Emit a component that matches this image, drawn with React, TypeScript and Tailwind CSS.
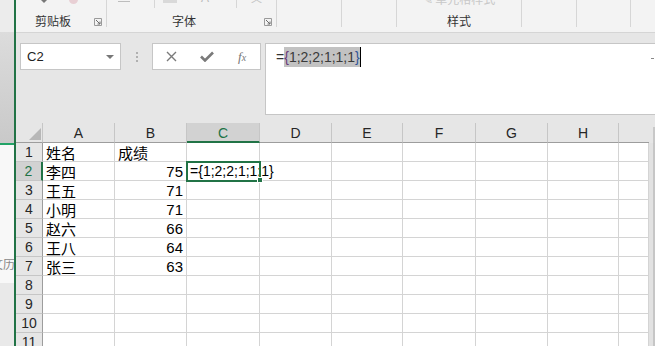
import React from "react";

const cjk = { fontFamily: '"Noto Sans CJK SC", "Liberation Sans", sans-serif' };
const latin = { fontFamily: '"Liberation Sans", "Noto Sans CJK SC", sans-serif' };

const cols = [
  { name: "A", w: "w-[72px]" },
  { name: "B", w: "w-[72px]" },
  { name: "C", w: "w-[73px]" },
  { name: "D", w: "w-[72px]" },
  { name: "E", w: "w-[71px]" },
  { name: "F", w: "w-[73px]" },
  { name: "G", w: "w-[72px]" },
  { name: "H", w: "w-[71px]" },
  { name: "", w: "w-[30px]" },
];

const rows: [string, string][] = [
  ["姓名", "成绩"],
  ["李四", "75"],
  ["王五", "71"],
  ["小明", "71"],
  ["赵六", "66"],
  ["王八", "64"],
  ["张三", "63"],
  ["", ""],
  ["", ""],
  ["", ""],
  ["", ""],
];

const Launcher = () => (
  <svg width="8" height="8" viewBox="0 0 8 8" className="mb-[2px]">
    <path d="M0.5 0.5h7v7h-7z" fill="none" stroke="#9a9a9a" strokeWidth="1" />
    <path d="M2 2l4 4M6 3.5V6H3.5" fill="none" stroke="#6a6a6a" strokeWidth="1" />
  </svg>
);

const Sep = () => <div className="w-px h-[27px] bg-[#d6d6d6] shrink-0" />;

const Ribbon = () => (
  <div className="h-[33px] bg-[#f3f3f3] border-b border-[#d5d5d5] flex items-start shrink-0 overflow-hidden">
    {/* 剪贴板 */}
    <div className="w-[90px] h-[32px] flex flex-col">
      <div className="h-[8px] flex items-start">
        <div className="ml-[25px] w-0 h-0 border-l-[3px] border-r-[3px] border-t-[3px] border-l-transparent border-r-transparent border-t-[#777]" />
        <div className="ml-[22px] -mt-[2px] w-[9px] h-[6px] rounded-b-full bg-[#e8cfd4]" />
      </div>
      <div className="flex items-end justify-between pl-[19px] pr-[4px] mt-[6px]">
        <span style={cjk} className="text-[12px] leading-[14px] text-[#333]">剪贴板</span>
        <Launcher />
      </div>
    </div>
    <Sep />
    {/* 字体 */}
    <div className="w-[169px] h-[32px] flex flex-col">
      <div className="h-[8px] flex items-start relative">
        <div className="ml-[11px] mt-[1px] w-[12px] h-px bg-[#bdbdbd]" />
        <div className="ml-[24px] h-[8px] w-px bg-[#d6d6d6]" />
        <div className="ml-[8px] w-[14px] h-[3px] bg-[#d9d9d9]" />
        <span style={latin} className="ml-[24px] -mt-[9px] text-[12px] leading-[14px] text-[#bbb]">A</span>
        <div className="ml-[27px] h-[8px] w-px bg-[#d6d6d6]" />
        <span style={cjk} className="ml-[14px] -mt-[10px] text-[11px] leading-[14px] text-[#c4c4c4]">文</span>
      </div>
      <div className="flex items-end justify-between pl-[65px] pr-[4px] mt-[6px]">
        <span style={cjk} className="text-[12px] leading-[14px] text-[#333]">字体</span>
        <Launcher />
      </div>
    </div>
    <Sep />
    <div className="w-[64px]" />
    <Sep />
    <div className="w-[54px]" />
    <Sep />
    {/* 样式 */}
    <div className="w-[124px] h-[32px] flex flex-col items-center">
      <div className="h-[8px] flex items-start">
        <span style={cjk} className="-mt-[8px] text-[12px] leading-[14px] text-[#c8c8c8]">✎ 单元格样式</span>
      </div>
      <span style={cjk} className="mt-[6px] text-[12px] leading-[14px] text-[#333]">样式</span>
    </div>
    <Sep />
    <div className="w-[54px]" />
    <Sep />
    <div className="w-[53px]" />
    <Sep />
  </div>
);

const FormulaArea = () => (
  <div className="h-[90px] bg-[#e6e6e6] flex items-start pt-[10px] pl-[4px] shrink-0">
    <div className="w-[101px] h-[27px] bg-white border border-[#c6c6c6] flex items-center justify-between pl-[6px] pr-[6px]">
      <span style={latin} className="text-[13px] text-[#222]">C2</span>
      <div className="w-0 h-0 border-l-[4px] border-r-[4px] border-t-[4px] border-l-transparent border-r-transparent border-t-[#777]" />
    </div>
    <div className="w-[31px] h-[27px] flex flex-col items-center justify-center gap-[2px]">
      <div className="w-[2px] h-[2px] bg-[#b0b0b0]" />
      <div className="w-[2px] h-[2px] bg-[#b0b0b0]" />
      <div className="w-[2px] h-[2px] bg-[#b0b0b0]" />
    </div>
    <div className="w-[109px] h-[27px] bg-white border border-[#c6c6c6] flex items-center">
      <div className="w-[36px] flex justify-center pl-[2px]">
        <svg width="11" height="11" viewBox="0 0 11 11">
          <path d="M1 1l9 9M10 1l-9 9" stroke="#7a7a7a" strokeWidth="1.4" />
        </svg>
      </div>
      <div className="w-[36px] flex justify-center">
        <svg width="14" height="11" viewBox="0 0 14 11">
          <path d="M1 5.5l4 4L13 1.5" fill="none" stroke="#7a7a7a" strokeWidth="2.6" />
        </svg>
      </div>
      <div className="w-[36px] flex justify-center">
        <span className="text-[13px] italic text-[#777]" style={{ fontFamily: '"Liberation Serif", serif' }}>
          f<span className="text-[10px]">x</span>
        </span>
      </div>
    </div>
    <div className="ml-[4px] flex-1 h-[72px] bg-white border border-[#c6c6c6] border-r-0 pl-[10px] pt-[3px] flex items-start">
      <span style={latin} className="text-[14px] leading-[20px] text-[#333]">=</span>
      <span style={latin} className="text-[14px] leading-[20px] bg-[#c2c2c2] text-[#3a3a3a]">
        <span className="text-[#6b3a7a]">{"{"}</span>1;2;2;1;1;1<span className="text-[#2f5597]">{"}"}</span>
      </span>
      <div className="w-px h-[20px] bg-black" />
      <div className="flex-1" />
      <div className="w-[3px] h-px bg-[#888] mt-[11px] mr-[1px]" />
    </div>
  </div>
);

const HeaderRow = () => (
  <div className="h-[20px] flex shrink-0 bg-[#e6e6e6]">
    <div className="w-[27px] h-full border-b border-[#9d9d9d] border-r border-r-[#c6c6c6] flex items-end justify-end pr-[1px] pb-[2px]">
      <div className="w-0 h-0 border-b-[12px] border-l-[12px] border-b-[#b7b7b7] border-l-transparent" />
    </div>
    {cols.map((c, i) =>
      c.name === "C" ? (
        <div
          key={i}
          className={`${c.w} h-full bg-[#d2d2d2] border-b-2 border-[#217346] border-r border-r-[#c6c6c6] flex items-center justify-center pt-[2px]`}
        >
          <span style={latin} className="text-[14px] text-[#217346]">{c.name}</span>
        </div>
      ) : (
        <div
          key={i}
          className={`${c.w} h-full border-b border-[#9d9d9d] ${i < cols.length - 1 ? "border-r border-r-[#c6c6c6]" : ""} flex items-center justify-center pt-[2px]`}
        >
          <span style={latin} className="text-[14px] text-[#262626]">{c.name}</span>
        </div>
      )
    )}
    <div className="flex-1 h-full bg-[#e6e6e6] flex justify-end pt-[4px]">
      <div className="w-[2px] h-full bg-[#c8c8c8]" />
    </div>
  </div>
);

const GridRow = ({ n, a, b }: { n: number; a: string; b: string }) => {
  const sel = n === 2;
  const textB = n === 1;
  return (
    <div className="h-[19px] flex shrink-0">
      <div
        className={`w-[27px] h-full border-b border-[#c6c6c6] flex items-center justify-center ${
          sel ? "bg-[#d2d2d2] border-r-2 border-r-[#217346]" : "bg-[#e6e6e6] border-r border-r-[#9d9d9d]"
        }`}
      >
        <span style={latin} className={`text-[14px] leading-[19px] ${sel ? "text-[#217346]" : "text-[#262626]"}`}>
          {n}
        </span>
      </div>
      {cols.map((c, i) => {
        const noRight = sel && i === 2;
        const alignRight = i === 1 && !textB;
        return (
          <div
            key={i}
            className={`${c.w} h-full border-b border-[#d4d4d4] ${
              noRight ? "" : "border-r border-r-[#d4d4d4]"
            } relative flex items-center ${alignRight ? "justify-end pr-[3px]" : "pl-[3px]"} ${i === 8 ? "border-r-[#a0a0a0]" : ""}`}
          >
            {i === 0 && (
              <span style={cjk} className="text-[15px] leading-[19px] text-black">
                {a}
              </span>
            )}
            {i === 1 && (
              <span style={textB ? cjk : latin} className="text-[15px] leading-[19px] text-black">
                {b}
              </span>
            )}
            {sel && i === 2 && (
              <>
                <span style={latin} className="relative z-10 whitespace-nowrap text-[14px] leading-[19px] text-black">
                  ={"{"}1;2;2;1;1;1{"}"}
                </span>
                <div className="absolute -left-[1px] -top-[1px] w-[75px] h-[21px] border-2 border-[#217346] z-20 pointer-events-none" />
                <div className="absolute -right-[3px] -bottom-[3px] w-[6px] h-[6px] bg-[#217346] border border-white z-30" />
              </>
            )}
          </div>
        );
      })}
      <div className="flex-1 h-full bg-[#e2e2e2] flex justify-end">
        <div className="w-[2px] h-full bg-[#c6c6c6]" />
      </div>
    </div>
  );
};

const LeftStrip = () => (
  <div className="w-[14px] h-full flex flex-col shrink-0 overflow-hidden">
    <div className="h-[32px] bg-[#ececec]" />
    <div className="h-[111px] bg-gradient-to-b from-[#dcdcdc] to-[#c9c9c9]" />
    <div className="h-[2px] bg-[#21a366]" />
    <div className="h-[138px] bg-[#f8f8f8] flex flex-col justify-end items-end pb-[12px]">
      <span style={cjk} className="text-[12px] leading-[14px] text-[#888] whitespace-nowrap -mr-[1px]">文历</span>
    </div>
    <div className="flex-1 bg-[#e9e9e9]" />
  </div>
);

export default function App() {
  return (
    <div className="w-[655px] h-[346px] flex overflow-hidden bg-white">
      <LeftStrip />
      <div className="w-[2px] h-full bg-[#217346] shrink-0" />
      <div className="flex-1 flex flex-col h-full overflow-hidden">
        <Ribbon />
        <FormulaArea />
        <HeaderRow />
        {rows.map((r, i) => (
          <GridRow key={i} n={i + 1} a={r[0]} b={r[1]} />
        ))}
      </div>
    </div>
  );
}
